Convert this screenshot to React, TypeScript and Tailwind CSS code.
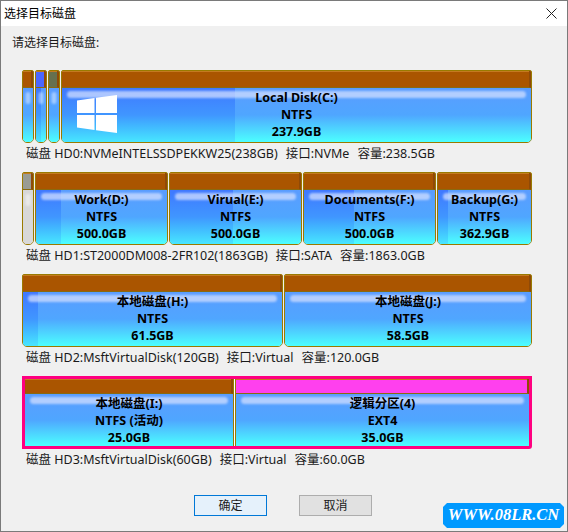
import { ReactNode } from 'react';

interface PartitionProps {
  width: string;
  head?: string;
  headH?: string;
  frame?: string;
  body?: string;
  used?: string;
  small?: boolean;
  lines?: string[];
  children?: ReactNode;
}

const DOTS = 'bg-[radial-gradient(#7a5a20_0.6px,transparent_0.7px)] bg-[length:6px_6px]';

function Partition({
  width,
  head = 'bg-[#aa5500]',
  headH = 'h-[17px]',
  frame = 'rounded-t-[2px] rounded-b-[5px] border border-[#9a7a00]',
  body = 'bg-linear-to-b from-[#5a9cff] via-[#4fa6ff] to-[#4cffff]',
  used,
  small,
  lines,
  children,
}: PartitionProps) {
  return (
    <div className={`${width} ${frame} flex h-full flex-col overflow-hidden`}>
      <div className={`${head} ${headH} shrink-0 border-r-2 border-b border-[#8a6a10] border-r-[#8f4a08] shadow-[inset_0_1px_0_#c47a20]`} />
      <div className={`${body} relative min-h-0 flex-1`}>
        {used && <div className={`${used} absolute inset-y-0 left-0 bg-linear-to-b from-[#4078ff] via-[#4096ff] to-[#48e6ff]`} />}
        {small ? (
          <div className="absolute top-[4px] left-1/2 h-[12px] w-[5px] -translate-x-1/2 rounded-full bg-white/45 blur-[1px]" />
        ) : (
          <div className="absolute top-[3px] right-[5px] left-[5px] h-[7px] rounded-full bg-[#d0deff]/75 blur-[1px]" />
        )}
        {children}
        {lines && (
          <div className="absolute inset-x-0 top-[1px] flex flex-col items-center text-[12.5px] leading-[17px] font-bold text-black">
            {lines.map((line) => (
              <span key={line}>{line}</span>
            ))}
          </div>
        )}
      </div>
    </div>
  );
}

function Caption({ disk, bus, size }: { disk: string; bus: string; size: string }) {
  return (
    <div className="mt-[1px] flex h-[20px] items-center gap-[8px] pl-[4px] text-[12.5px] text-[#1a1a1a]">
      <span>{disk}</span>
      <span>{bus}</span>
      <span>{size}</span>
    </div>
  );
}

function WinLogo() {
  return (
    <svg className="absolute top-[7px] left-[15px]" width="40" height="38" viewBox="0 0 40 38" fill="#fff">
      <path d="M0 5.5 L17.5 3 V18 H0 Z" />
      <path d="M19 2.8 L40 0 V18 H19 Z" />
      <path d="M0 20 H17.5 V35 L0 32.5 Z" />
      <path d="M19 20 H40 V38 L19 35.2 Z" />
    </svg>
  );
}

export default function App() {
  return (
    <div
      className="relative flex h-[532px] w-[568px] flex-col overflow-hidden border border-[#7a7a7a] bg-[#f0f0f0]"
      style={{ fontFamily: '"Noto Sans", "Noto Sans CJK SC", sans-serif' }}
    >
      <div className="flex h-[25px] shrink-0 items-center justify-between bg-white pr-[10px] pl-[3px] text-[12px] text-black">
        <span>选择目标磁盘</span>
        <svg width="11" height="11" viewBox="0 0 11 11" stroke="#222" strokeWidth="1" fill="none">
          <path d="M0.5 0.5 L10.5 10.5 M10.5 0.5 L0.5 10.5" />
        </svg>
      </div>

      <div className="flex flex-1 flex-col px-[21px]">
        <div className="-ml-[10px] flex h-[33px] items-center pt-[1px] text-[12px] text-[#1a1a1a]">请选择目标磁盘:</div>

        <div className="mt-[11px] flex h-[73px] w-[510px] gap-[1px]">
          <Partition width="w-[12px]" small head="bg-[#aa5500]" />
          <Partition width="w-[12px]" small head="bg-[#4a66ff]" used="w-[5px]" />
          <Partition width="w-[12px]" small head="bg-[#66704f]" />
          <Partition width="w-[471px]" used="w-[173px]" lines={['Local Disk(C:)', 'NTFS', '237.9GB']}>
            <WinLogo />
          </Partition>
        </div>
        <Caption disk="磁盘 HD0:NVMeINTELSSDPEKKW25(238GB)" bus="接口:NVMe" size="容量:238.5GB" />

        <div className="mt-[8px] flex h-[73px] w-[510px] gap-[1px]">
          <Partition width="w-[12px]" small head="bg-[#999c94]" body="bg-[#d8d8d8]" />
          <Partition width="w-[133px]" used="w-[25px]" lines={['Work(D:)', 'NTFS', '500.0GB']} />
          <Partition width="w-[133px]" used="w-[63px]" lines={['Virual(E:)', 'NTFS', '500.0GB']} />
          <Partition width="w-[133px]" used="w-[50px]" lines={['Documents(F:)', 'NTFS', '500.0GB']} />
          <Partition width="w-[95px]" used="w-[10px]" lines={['Backup(G:)', 'NTFS', '362.9GB']} />
        </div>
        <Caption disk="磁盘 HD1:ST2000DM008-2FR102(1863GB)" bus="接口:SATA" size="容量:1863.0GB" />

        <div className="mt-[8px] flex h-[73px] w-[510px] gap-[1px]">
          <Partition width="w-[261px]" used="w-[15px]" lines={['本地磁盘(H:)', 'NTFS', '61.5GB']} />
          <Partition width="w-[248px]" head={`bg-[#aa5500] ${DOTS}`} lines={['本地磁盘(J:)', 'NTFS', '58.5GB']} />
        </div>
        <Caption disk="磁盘 HD2:MsftVirtualDisk(120GB)" bus="接口:Virtual" size="容量:120.0GB" />

        <div className="mt-[8px] flex h-[73px] w-[510px] rounded-br-[3px] border-[3px] border-[#ff0080]">
          <Partition
            width="w-[209px]"
            headH="h-[15px]"
            frame="border-r border-[#9a7a00]"
            lines={['本地磁盘(I:)', 'NTFS (活动)', '25.0GB']}
          />
          <div className="w-[1px] bg-white" />
          <Partition
            width="w-[294px]"
            headH="h-[15px]"
            frame="border-l border-[#9a7a00]"
            head={`bg-[#ff40ee] ${DOTS}`}
            lines={['逻辑分区(4)', 'EXT4', '35.0GB']}
          />
        </div>
        <Caption disk="磁盘 HD3:MsftVirtualDisk(60GB)" bus="接口:Virtual" size="容量:60.0GB" />

        <div className="mt-[25px] flex gap-[32px] pl-[172px] text-[12px] text-[#1a1a1a]">
          <button className="h-[21px] w-[73px] border border-[#0078d7] bg-[#e5f1fb]">确定</button>
          <button className="h-[21px] w-[73px] border border-[#adadad] bg-[#e1e1e1]">取消</button>
        </div>
      </div>

      <div
        className="absolute top-[502px] left-[442px] flex h-[25px] w-[121px] items-center justify-center bg-[#0099ff] text-[16.5px] font-bold text-white italic [clip-path:polygon(4px_0,calc(100%-4px)_0,100%_4px,100%_calc(100%-4px),calc(100%-4px)_100%,4px_100%,0_calc(100%-4px),0_4px)]"
        style={{ fontFamily: '"Liberation Serif", serif' }}
      >
        WWW.08LR.CN
      </div>
    </div>
  );
}
